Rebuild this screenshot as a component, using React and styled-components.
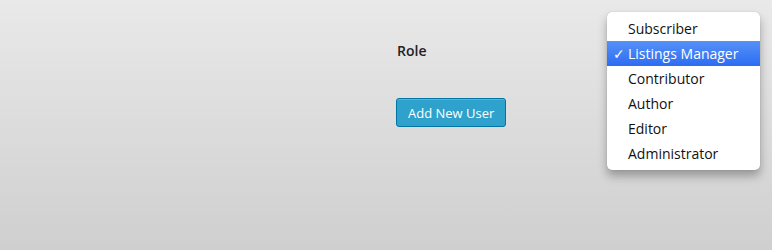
import React from 'react';
import styled, { createGlobalStyle } from 'styled-components';

const Global = createGlobalStyle`
  html, body { margin: 0; padding: 0; }
  body { font-family: "Open Sans", "Liberation Sans", sans-serif; }
`;

const roles = ['Subscriber', 'Listings Manager', 'Contributor', 'Author', 'Editor', 'Administrator'];

const App = () => {
  const selected = 'Listings Manager';
  return (
    <Page>
      <Global />
      <Form>
        <Label>Role</Label>
        <Button>Add New User</Button>
      </Form>
      <Menu>
        {roles.map((r) => (
          <Item key={r} $active={r === selected}>
            <Check>{r === selected ? '✓' : ''}</Check>
            {r}
          </Item>
        ))}
      </Menu>
    </Page>
  );
};

const Page = styled.div`
  position: relative;
  width: 772px;
  height: 250px;
  overflow: hidden;
  background: linear-gradient(#e9e9e9, #cfcfcf);
`;

const Form = styled.div`
  display: flex;
  flex-direction: column;
  align-items: flex-start;
  gap: 37px;
  padding: 41px 0 0 396px;
`;

const Label = styled.div`
  font-size: 14px;
  font-weight: 600;
  color: #222;
  line-height: 20px;
  padding-left: 1px;
`;

const Button = styled.button`
  font-family: inherit;
  font-size: 13px;
  color: #fff;
  background: #2ea2cc;
  border: 1px solid #0074a2;
  border-radius: 3px;
  height: 29px;
  padding: 0 11px;
  box-shadow: inset 0 1px 0 rgba(120, 200, 230, 0.5);
`;

const Menu = styled.ul`
  position: absolute;
  left: 607px;
  top: 12px;
  width: 153px;
  margin: 0;
  padding: 4px 0;
  list-style: none;
  background: #fff;
  border-radius: 5px;
  box-shadow: 0 6px 10px rgba(0, 0, 0, 0.3), 0 0 1px rgba(0, 0, 0, 0.3);
`;

const Item = styled.li`
  display: flex;
  align-items: center;
  height: 25px;
  font-size: 14px;
  color: ${({ $active }) => ($active ? '#fff' : '#111')};
  background: ${({ $active }) => ($active ? 'linear-gradient(#5691f8, #2c6cf2)' : 'transparent')};
`;

const Check = styled.span`
  width: 21px;
  padding-left: 6px;
  box-sizing: border-box;
  font-family: "DejaVu Sans", sans-serif;
  font-weight: 700;
  font-size: 14px;
`;

export default App;
